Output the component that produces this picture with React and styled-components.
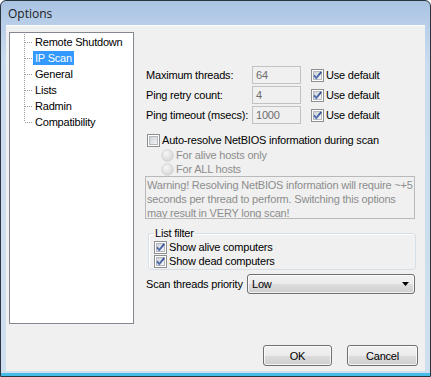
import React from "react";
import styled, { createGlobalStyle } from "styled-components";

const GlobalStyle = createGlobalStyle`
  html, body {
    margin: 0;
    padding: 0;
    background: #ffffff;
  }
  * {
    box-sizing: border-box;
  }
`;

const Window = styled.div`
  width: 431px;
  height: 377px;
  display: flex;
  flex-direction: column;
  border: 1px solid #2a3540;
  border-radius: 6px 6px 0 0;
  overflow: hidden;
  background: linear-gradient(
    to bottom,
    #a9c3e2 0px,
    #b7cde8 22px,
    #c9dbee 60px,
    #cfdfef 100%
  );
  box-shadow: inset 0 -3px 0 #45bde8;
  font-family: "Liberation Sans", Arial, sans-serif;
  font-size: 11px;
  letter-spacing: -0.2px;
  color: #000;
`;

const TitleBar = styled.div`
  height: 24px;
  flex-shrink: 0;
  display: flex;
  align-items: center;
  padding-left: 7px;
  font-family: "Open Sans", "Noto Sans", sans-serif;
  font-size: 12px;
  letter-spacing: 0;
  color: #1b1b1b;
`;

const Frame = styled.div`
  flex: 1;
  display: flex;
  padding: 0 5px 5px 5px;
  min-height: 0;
`;

const Client = styled.div`
  flex: 1;
  display: flex;
  flex-direction: column;
  background: #f0f0f0;
  padding: 7px 0 0 3px;
  box-shadow: inset 0 1px 0 #fbfcfe;
`;

const Body = styled.div`
  display: flex;
  align-items: flex-start;
`;

const Tree = styled.div`
  width: 125px;
  height: 292px;
  background: #fff;
  border: 1px solid #828790;
  padding-top: 1px;
  flex-shrink: 0;
`;

const dot = "#9a9a9a";

const TreeItem = styled.div`
  height: 16px;
  display: flex;
  align-items: center;
  padding-left: 23px;
  background-image: repeating-linear-gradient(
      to bottom,
      ${dot} 0 1px,
      transparent 1px 2px
    ),
    repeating-linear-gradient(to right, ${dot} 0 1px, transparent 1px 2px);
  background-repeat: no-repeat;
  background-position: 14px 0, 15px 8px;
  background-size: 1px ${(p) => (p.$last ? "8px" : "16px")}, 8px 1px;
`;

const TreeLabel = styled.span`
  line-height: 14px;
  padding: 0 2px;
  white-space: nowrap;
  background: ${(p) => (p.$selected ? "#3399ff" : "transparent")};
  color: ${(p) => (p.$selected ? "#fff" : "#000")};
`;

const Panel = styled.div`
  margin-left: 11px;
  padding-top: 33px;
  width: 271px;
  display: flex;
  flex-direction: column;
`;

const FieldRow = styled.div`
  height: 20px;
  display: flex;
  align-items: center;
`;

const FieldLabel = styled.span`
  width: ${(p) => p.$width || 107}px;
  padding-left: 1px;
  flex-shrink: 0;
  white-space: nowrap;
`;

const NumInput = styled.div`
  width: 49px;
  height: 18px;
  border: 1px solid #c2c2c2;
  background: #f0f0f0;
  color: #6d6d6d;
  padding-left: 3px;
  display: flex;
  align-items: center;
  margin-right: 10px;
`;

const CheckLine = styled.label`
  display: flex;
  align-items: center;
  gap: 2px;
  height: ${(p) => p.$h || 14}px;
  white-space: nowrap;
  padding-left: ${(p) => p.$indent || 0}px;
  color: ${(p) => (p.$disabled ? "#8d8d8d" : "#000")};
  svg {
    flex-shrink: 0;
  }
`;

const AutoRow = styled(CheckLine)`
  margin-top: 7px;
  height: 16px;
  padding-left: 2px;
  gap: 2px;
`;

const Warning = styled.div`
  width: 270px;
  height: 43px;
  border: 1px solid #b9b9b9;
  color: #8d8d8d;
  padding: 1px 0 0 1px;
  line-height: 14px;
  white-space: nowrap;
  overflow: hidden;
`;

const Group = styled.fieldset`
  margin: 7px 0 0 3px;
  width: 268px;
  border: 1px solid #d5dfe5;
  box-shadow: inset 1px 1px 0 #fff;
  border-radius: 3px;
  padding: 0 0 1px 5px;
`;

const Legend = styled.legend`
  padding: 0 1px;
  margin-left: 0;
  line-height: 14px;
`;

const PriorityRow = styled.div`
  display: flex;
  align-items: center;
  height: 20px;
  margin-top: 4px;
`;

const Select = styled.div`
  width: 168px;
  height: 20px;
  border: 1px solid #707070;
  border-radius: 3px;
  background: linear-gradient(
    to bottom,
    #f2f2f2 0%,
    #ebebeb 50%,
    #dddddd 51%,
    #cfcfcf 100%
  );
  box-shadow: inset 0 0 0 1px rgba(255, 255, 255, 0.7);
  display: flex;
  align-items: center;
  justify-content: space-between;
  padding: 0 5px 0 4px;
`;

const ButtonRow = styled.div`
  margin-top: auto;
  display: flex;
  justify-content: flex-end;
  gap: 15px;
  padding: 0 7px 5px 0;
`;

const Button = styled.button`
  width: ${(p) => p.$w}px;
  height: 21px;
  border: 1px solid #707070;
  border-radius: 3px;
  background: linear-gradient(
    to bottom,
    #f2f2f2 0%,
    #ebebeb 50%,
    #dddddd 51%,
    #cfcfcf 100%
  );
  box-shadow: inset 0 0 0 1px rgba(255, 255, 255, 0.75);
  font-family: "Liberation Sans", Arial, sans-serif;
  font-size: 11px;
  letter-spacing: -0.2px;
  color: #000;
  padding: 0;
`;

function CheckBox({ checked }) {
  return (
    <svg width="13" height="13" viewBox="0 0 13 13">
      <defs>
        <linearGradient id="cbg" x1="0" y1="0" x2="1" y2="1">
          <stop offset="0" stopColor="#cbcfd5" />
          <stop offset="1" stopColor="#f7f7f7" />
        </linearGradient>
        <linearGradient id="ckg" x1="0" y1="0" x2="0" y2="1">
          <stop offset="0" stopColor="#2c4a8e" />
          <stop offset="1" stopColor="#5a73b3" />
        </linearGradient>
      </defs>
      <rect x="0.5" y="0.5" width="12" height="12" fill="#fff" stroke="#8e8f8f" />
      <rect x="2.5" y="2.5" width="8" height="8" fill="url(#cbg)" stroke="#b3b8be" />
      {checked && (
        <path
          d="M3 6.3 L5.3 9 L10.2 3"
          fill="none"
          stroke="url(#ckg)"
          strokeWidth="1.9"
        />
      )}
    </svg>
  );
}

function Radio() {
  return (
    <svg width="13" height="13" viewBox="0 0 13 13">
      <defs>
        <radialGradient id="rg" cx="0.4" cy="0.35" r="0.7">
          <stop offset="0" stopColor="#f7f7f7" />
          <stop offset="1" stopColor="#d4d4d4" />
        </radialGradient>
      </defs>
      <circle cx="6.5" cy="6.5" r="5.8" fill="url(#rg)" stroke="#d0d0d0" strokeWidth="0.8" />
    </svg>
  );
}

function Arrow() {
  return (
    <svg width="7" height="4" viewBox="0 0 7 4">
      <path d="M0 0 H7 L3.5 4 Z" fill="#000" />
    </svg>
  );
}

const treeItems = [
  "Remote Shutdown",
  "IP Scan",
  "General",
  "Lists",
  "Radmin",
  "Compatibility",
];

const fields = [
  { label: "Maximum threads:", value: "64" },
  { label: "Ping retry count:", value: "4" },
  { label: "Ping timeout (msecs):", value: "1000" },
];

const warningLines = [
  "Warning! Resolving NetBIOS information will require ~+5",
  "seconds per thread to perform. Switching this options",
  "may result in VERY long scan!",
];

export default function App() {
  return (
    <>
      <GlobalStyle />
      <Window>
        <TitleBar>Options</TitleBar>
        <Frame>
          <Client>
            <Body>
              <Tree>
                {treeItems.map((name, i) => (
                  <TreeItem key={name} $last={i === treeItems.length - 1}>
                    <TreeLabel $selected={name === "IP Scan"}>{name}</TreeLabel>
                  </TreeItem>
                ))}
              </Tree>
              <Panel>
                {fields.map((f) => (
                  <FieldRow key={f.label}>
                    <FieldLabel>{f.label}</FieldLabel>
                    <NumInput>{f.value}</NumInput>
                    <CheckLine>
                      <CheckBox checked />
                      Use default
                    </CheckLine>
                  </FieldRow>
                ))}
                <AutoRow>
                  <CheckBox />
                  Auto-resolve NetBIOS information during scan
                </AutoRow>
                <CheckLine $indent={16} $disabled>
                  <Radio />
                  For alive hosts only
                </CheckLine>
                <CheckLine $indent={16} $disabled>
                  <Radio />
                  For ALL hosts
                </CheckLine>
                <Warning>
                  {warningLines.map((line) => (
                    <div key={line}>{line}</div>
                  ))}
                </Warning>
                <Group>
                  <Legend>List filter</Legend>
                  <CheckLine>
                    <CheckBox checked />
                    Show alive computers
                  </CheckLine>
                  <CheckLine>
                    <CheckBox checked />
                    Show dead computers
                  </CheckLine>
                </Group>
                <PriorityRow>
                  <FieldLabel $width={102}>Scan threads priority</FieldLabel>
                  <Select>
                    <span>Low</span>
                    <Arrow />
                  </Select>
                </PriorityRow>
              </Panel>
            </Body>
            <ButtonRow>
              <Button $w={69}>OK</Button>
              <Button $w={71}>Cancel</Button>
            </ButtonRow>
          </Client>
        </Frame>
      </Window>
    </>
  );
}
